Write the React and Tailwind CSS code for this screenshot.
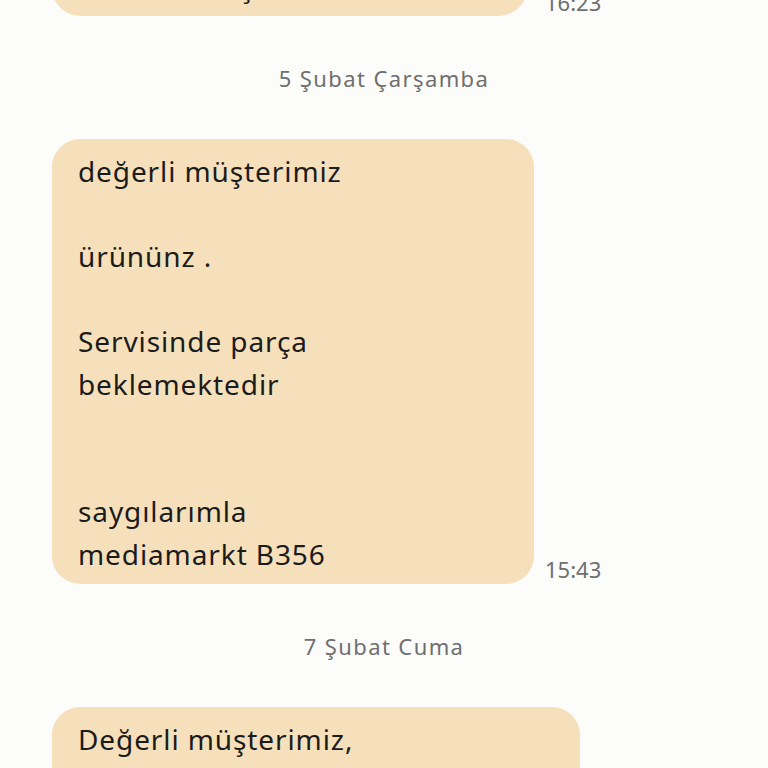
const FONT = "font-['Noto_Sans','Roboto',sans-serif]";

function Bubble({ width, lines, className = '' }) {
  return (
    <div className={`${width} shrink-0 rounded-[28px] bg-[#f6e0bb] pl-[26px] pr-4 pt-[11px] pb-[8px] text-[28px] leading-[42.6px] tracking-[0.9px] text-[#1b1b1b] ${className}`}>
      {lines.map((line, i) => (
        <div key={i} className="whitespace-pre">{line || '\u00a0'}</div>
      ))}
    </div>
  );
}

function DateLabel({ children }) {
  return (
    <div className="text-center text-[22px] leading-[26px] tracking-[1.4px] text-[#6f6f6f]">{children}</div>
  );
}

export default function App() {
  return (
    <div className={`h-[768px] w-[768px] overflow-hidden bg-[#fcfcfa] ${FONT}`}>
      <div className="flex flex-col pl-[52px]">
        {/* previous message, cut off at the top */}
        <div className="-mt-[46px] flex items-end">
          <Bubble width="w-[475px]" lines={['                Teşekkürler']} />
          <span className="mb-[1px] ml-[18px] text-[22px] leading-[26px] text-[#6f6f6f]">16:23</span>
        </div>

        <div className="pr-[52px] pt-[49px] pb-[48px]">
          <DateLabel>5 Şubat Çarşamba</DateLabel>
        </div>

        <div className="flex items-end">
          <Bubble
            width="w-[482px]"
            lines={[
              'değerli müşterimiz',
              '',
              'ürününz .',
              '',
              'Servisinde parça',
              'beklemektedir',
              '',
              '',
              'saygılarımla',
              'mediamarkt B356',
            ]}
          />
          <span className="mb-[2px] ml-[11px] text-[22px] leading-[26px] text-[#6f6f6f]">15:43</span>
        </div>

        <div className="pr-[52px] pt-[49px] pb-[48px]">
          <DateLabel>7 Şubat Cuma</DateLabel>
        </div>

        <div className="flex items-end">
          <Bubble
            width="w-[528px]"
            lines={['Değerli müşterimiz,', 'ürününüz teslim edilmeye', 'hazırdır.']}
          />
        </div>
      </div>
    </div>
  );
}
